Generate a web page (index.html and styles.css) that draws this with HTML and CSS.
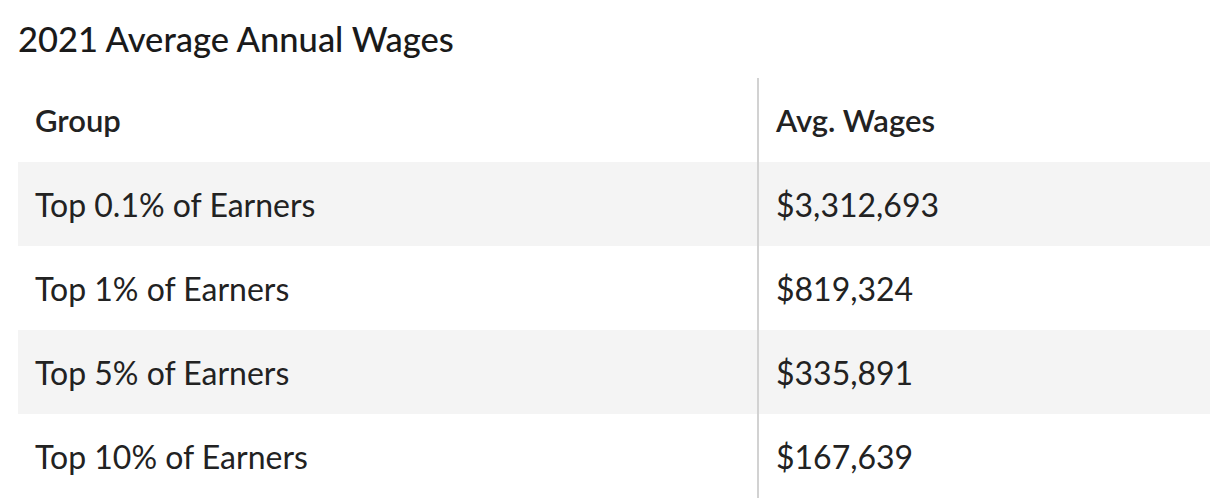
FILE: index.html
```html
<!DOCTYPE html>
<html lang="en">
<head>
<meta charset="utf-8">
<title>2021 Average Annual Wages</title>
<link rel="stylesheet" href="styles.css">
</head>
<body>
<div class="wrap">
  <h2 class="title">2021 Average Annual Wages</h2>
  <table class="wages">
    <thead>
      <tr><th>Group</th><th class="col2">Avg. Wages</th></tr>
    </thead>
    <tbody>
      <tr class="alt"><td>Top 0.1% of Earners</td><td class="col2">$3,312,693</td></tr>
      <tr><td>Top 1% of Earners</td><td class="col2">$819,324</td></tr>
      <tr class="alt"><td>Top 5% of Earners</td><td class="col2">$335,891</td></tr>
      <tr><td>Top 10% of Earners</td><td class="col2">$167,639</td></tr>
    </tbody>
  </table>
</div>
</body>
</html>
```
FILE: styles.css
```css
html, body {
  margin: 0;
  padding: 0;
  background: #fff;
}
.wrap {
  padding: 18px 21px 0 18px;
}
.title {
  margin: 0;
  font-family: "Lato", sans-serif;
  font-weight: 500;
  font-size: 34.5px;
  line-height: 42px;
  color: #1a1a1a;
  height: 60px;
}
.wages {
  width: 1192px;
  border-collapse: collapse;
  font-family: "Lato", sans-serif;
  color: #222;
}
.wages th, .wages td {
  height: 84px;
  padding: 0 17px;
  text-align: left;
  box-sizing: border-box;
}
.wages th {
  font-size: 31px;
  font-weight: 600;
}
.wages td {
  font-size: 32px;
  font-weight: 400;
}
.wages .col2 {
  width: 452px;
  border-left: 2px solid #d2d2d2;
}
.wages tr.alt {
  background: #f4f4f4;
}
```
